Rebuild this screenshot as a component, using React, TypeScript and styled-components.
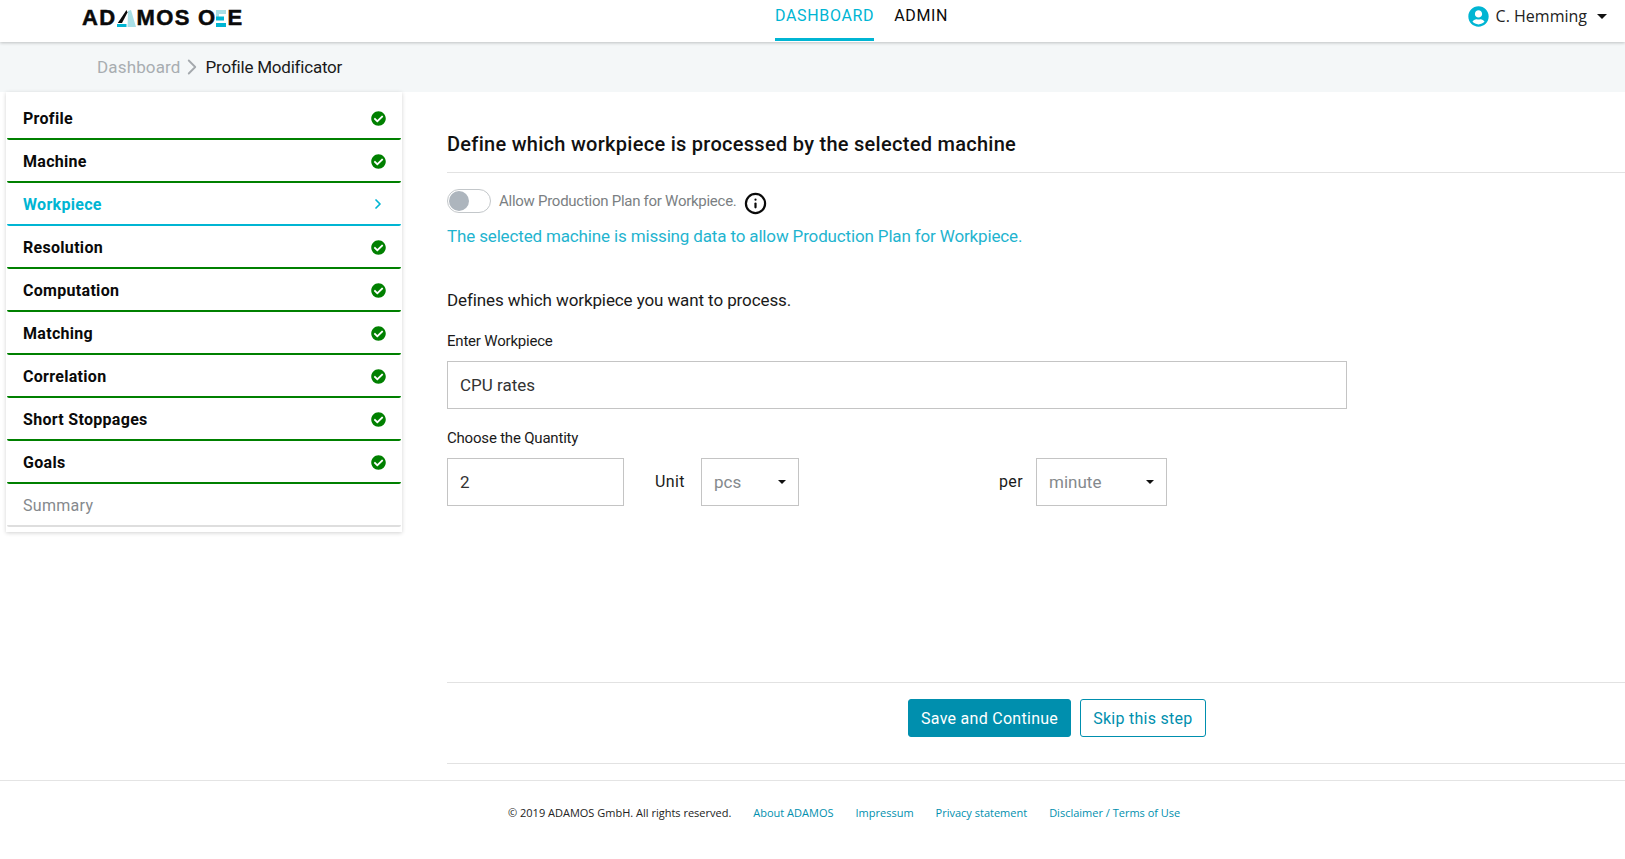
import React from "react";
import styled, { createGlobalStyle } from "styled-components";
import { FaCheckCircle, FaUserCircle } from "react-icons/fa";
import { ChevronRight, Info } from "lucide-react";

const TEAL = "#00b5d3";
const DEEP = "#008fae";
const GREEN = "#008000";
const FONT = `"Roboto", "Liberation Sans", sans-serif`;

const Global = createGlobalStyle`
  html, body { margin: 0; padding: 0; background: #fff; }
  body { font-family: ${FONT}; color: #111; overflow: hidden; }
  * { box-sizing: border-box; }
`;

const Page = styled.div`
  width: 1625px;
  height: 859px;
  display: flex;
  flex-direction: column;
  overflow: hidden;
`;

const Header = styled.header`
  height: 42px;
  flex: none;
  display: grid;
  grid-template-columns: 775px auto 1fr;
  position: relative;
  z-index: 2;
  background: #fff;
  box-shadow: 0 1px 3px rgba(0, 0, 0, 0.22);
`;

const LogoWrap = styled.div`
  padding: 4px 0 0 82px;
  height: 32px;
  display: flex;
  align-items: center;
  font-family: "Liberation Sans", sans-serif;
  font-weight: 700;
  font-size: 22px;
  letter-spacing: 1.4px;
  -webkit-text-stroke: 0.5px #0a0a0a;
  color: #0a0a0a;
  white-space: nowrap;
`;

const LogoGap = styled.span`
  width: 7px;
`;

const LogoMarkA = styled.svg`
  margin: 0 1px 0 0;
`;

const LogoMarkE = styled.svg`
  margin: 0 1px 0 0;
`;

const Nav = styled.nav`
  display: flex;
  gap: 20px;
`;

const NavLink = styled.a<{ $active?: boolean }>`
  height: 41px;
  padding-top: 5px;
  font-size: 16px;
  line-height: 21px;
  letter-spacing: 0.65px;
  color: ${(p) => (p.$active ? TEAL : "#0a0a0a")};
  border-bottom: 3px solid ${(p) => (p.$active ? TEAL : "transparent")};
`;

const UserMenu = styled.div`
  justify-self: end;
  display: flex;
  align-items: center;
  height: 32px;
  padding-right: 18px;
  font-family: "Open Sans", sans-serif;
  font-size: 16px;
  color: #222;
`;

const UserIcon = styled(FaUserCircle)`
  color: ${TEAL};
  font-size: 21px;
  margin-right: 7px;
`;

const Caret = styled.span<{ $w?: number }>`
  display: inline-block;
  width: 0;
  height: 0;
  border-left: ${(p) => p.$w ?? 4}px solid transparent;
  border-right: ${(p) => p.$w ?? 4}px solid transparent;
  border-top: ${(p) => p.$w ?? 4}px solid #111;
`;

const UserCaret = styled(Caret)`
  margin-left: 10px;
`;

const Crumbs = styled.div`
  height: 50px;
  flex: none;
  background: #f4f7f8;
  display: flex;
  align-items: center;
  padding: 0 0 0 97px;
  font-size: 17px;
`;

const CrumbLink = styled.span`
  color: #a8adb1;
  letter-spacing: 0.15px;
`;

const CrumbSep = styled(ChevronRight)`
  color: #a4a9ad;
  margin: 0 1px 0 -2px;
`;

const CrumbNow = styled.span`
  color: #1a1a1a;
  letter-spacing: -0.22px;
`;

const Body = styled.div`
  flex: 1;
  min-height: 0;
  display: flex;
  align-items: flex-start;
`;

const Steps = styled.aside`
  width: 396px;
  flex: none;
  margin-left: 6px;
  padding: 5px 0 5px;
  background: #fff;
  box-shadow: 0 1px 4px rgba(0, 0, 0, 0.18);
`;

const Step = styled.div<{ $state: "done" | "active" | "todo" }>`
  height: 43px;
  margin: 0 1px;
  padding: 1px 15px 0 16px;
  display: flex;
  align-items: center;
  justify-content: space-between;
  font-size: 16px;
  font-weight: ${(p) => (p.$state === "todo" ? 400 : 700)};
  letter-spacing: 0.3px;
  color: ${(p) => (p.$state === "active" ? TEAL : p.$state === "todo" ? "#85898d" : "#0a0a0a")};
  border-bottom: 2px solid
    ${(p) => (p.$state === "active" ? TEAL : p.$state === "todo" ? "#dedede" : GREEN)};
  border-radius: 0 0 2px 2px;
`;

const Done = styled(FaCheckCircle)`
  color: ${GREEN};
  font-size: 15px;
`;

const ActiveChevron = styled(ChevronRight)`
  color: ${TEAL};
`;

const Main = styled.main`
  flex: 1;
  min-width: 0;
  margin-left: 45px;
  display: flex;
  flex-direction: column;
`;

const Title = styled.h1`
  margin: 0;
  height: 81px;
  padding-top: 39px;
  font-size: 20px;
  line-height: 26px;
  font-weight: 500;
  letter-spacing: 0.28px;
  color: #111;
  border-bottom: 1px solid #e2e2e2;
`;

const ToggleRow = styled.div`
  margin-top: 16px;
  height: 24px;
  display: flex;
  align-items: center;
`;

const Toggle = styled.span`
  width: 44px;
  height: 24px;
  border: 1px solid #c3c7ca;
  border-radius: 12px;
  background: #fff;
  display: flex;
  align-items: center;
  padding-left: 1px;
`;

const Knob = styled.span`
  width: 20px;
  height: 20px;
  border-radius: 50%;
  background: #adb5bd;
`;

const ToggleLabel = styled.span`
  margin-left: 8px;
  font-size: 15px;
  color: #7b7f83;
  letter-spacing: -0.27px;
`;

const InfoIcon = styled(Info)`
  margin: 4px 0 0 7px;
  color: #0a0a0a;
`;

const Notice = styled.p`
  margin: 11px 0 0;
  font-size: 17px;
  line-height: 24px;
  color: #1fb4cf;
  letter-spacing: -0.15px;
`;

const Intro = styled.p`
  margin: 40px 0 0;
  font-size: 17px;
  line-height: 24px;
  color: #1a1a1a;
  letter-spacing: -0.1px;
`;

const FieldLabel = styled.label`
  display: block;
  font-size: 15px;
  line-height: 20px;
  color: #1a1a1a;
  letter-spacing: -0.2px;
`;

const WorkpieceLabel = styled(FieldLabel)`
  margin-top: 19px;
`;

const QuantityLabel = styled(FieldLabel)`
  margin-top: 19px;
`;

const TextInput = styled.input<{ $w: number }>`
  width: ${(p) => p.$w}px;
  height: 48px;
  padding: 0 12px;
  border: 1px solid #c4c4c4;
  border-radius: 0;
  outline: none;
  background: #fff;
  font-family: ${FONT};
  font-size: 17px;
  color: #333;
`;

const WorkpieceInput = styled(TextInput)`
  display: block;
  margin-top: 10px;
`;

const QuantityRow = styled.div`
  margin-top: 10px;
  display: flex;
  align-items: center;
`;

const RowText = styled.span<{ $left: number; $right: number }>`
  margin: -2px ${(p) => p.$right}px 0 ${(p) => p.$left}px;
  font-size: 16px;
  letter-spacing: 0.4px;
  color: #1a1a1a;
`;

const Select = styled.div<{ $w: number }>`
  width: ${(p) => p.$w}px;
  height: 48px;
  padding: 0 12px;
  border: 1px solid #c4c4c4;
  display: flex;
  align-items: center;
  justify-content: space-between;
  font-size: 17px;
  color: #85898d;
`;

const Actions = styled.div`
  margin-top: 176px;
  height: 82px;
  border-top: 1px solid #e2e2e2;
  border-bottom: 1px solid #e2e2e2;
  display: flex;
  align-items: flex-start;
  gap: 9px;
  padding-left: 461px;
  padding-top: 16px;
`;

const Button = styled.button<{ $primary?: boolean }>`
  height: 38px;
  padding: 0 12px;
  border: 1px solid ${DEEP};
  border-radius: 3px;
  background: ${(p) => (p.$primary ? DEEP : "#fff")};
  color: ${(p) => (p.$primary ? "#fff" : DEEP)};
  font-family: ${FONT};
  font-size: 16px;
  letter-spacing: 0.28px;
`;

const Footer = styled.footer`
  height: 79px;
  flex: none;
  border-top: 1px solid #e4e4e4;
  display: flex;
  gap: 22px;
  padding: 23px 0 0 508px;
  font-family: "Open Sans", sans-serif;
  font-size: 11px;
  line-height: 18px;
  color: #222;
`;

const FooterLink = styled.a`
  color: ${DEEP};
`;

const steps: { label: string; state: "done" | "active" | "todo" }[] = [
  { label: "Profile", state: "done" },
  { label: "Machine", state: "done" },
  { label: "Workpiece", state: "active" },
  { label: "Resolution", state: "done" },
  { label: "Computation", state: "done" },
  { label: "Matching", state: "done" },
  { label: "Correlation", state: "done" },
  { label: "Short Stoppages", state: "done" },
  { label: "Goals", state: "done" },
  { label: "Summary", state: "todo" },
];

const LogoA = () => (
  <LogoMarkA width="19" height="17" viewBox="0 0 19 17" aria-label="A">
    <polygon points="9.5,0 10.5,2.5 5,13 0.8,13" fill="#0a0a0a" />
    <polygon points="0,14 9.5,14 9.5,17 0,17" fill={TEAL} />
    <polygon points="11,1 14,0 19,17 10.5,17" fill="#a9dfe6" />
  </LogoMarkA>
);

const LogoE = () => (
  <LogoMarkE width="10" height="17" viewBox="0 0 10 17" aria-label="E">
    <rect x="0" y="0" width="10" height="4" fill="#a9dfe6" />
    <rect x="0" y="0" width="3" height="9" fill="#a9dfe6" />
    <rect x="0" y="6.5" width="8" height="4" fill={TEAL} />
    <rect x="0" y="13" width="10" height="4" fill={TEAL} />
  </LogoMarkE>
);

export default function App() {
  return (
    <Page>
      <Global />
      <Header>
        <LogoWrap>
          AD
          <LogoA />
          MOS
          <LogoGap />
          O
          <LogoE />
          E
        </LogoWrap>
        <Nav>
          <NavLink $active>DASHBOARD</NavLink>
          <NavLink>ADMIN</NavLink>
        </Nav>
        <UserMenu>
          <UserIcon />
          C. Hemming
          <UserCaret $w={5} />
        </UserMenu>
      </Header>
      <Crumbs>
        <CrumbLink>Dashboard</CrumbLink>
        <CrumbSep size={26} strokeWidth={1.7} />
        <CrumbNow>Profile Modificator</CrumbNow>
      </Crumbs>
      <Body>
        <Steps>
          {steps.map((s) => (
            <Step key={s.label} $state={s.state}>
              {s.label}
              {s.state === "done" && <Done />}
              {s.state === "active" && <ActiveChevron size={16} strokeWidth={2.6} />}
            </Step>
          ))}
        </Steps>
        <Main>
          <Title>Define which workpiece is processed by the selected machine</Title>
          <ToggleRow>
            <Toggle>
              <Knob />
            </Toggle>
            <ToggleLabel>Allow Production Plan for Workpiece.</ToggleLabel>
            <InfoIcon size={23} strokeWidth={2.3} />
          </ToggleRow>
          <Notice>The selected machine is missing data to allow Production Plan for Workpiece.</Notice>
          <Intro>Defines which workpiece you want to process.</Intro>
          <WorkpieceLabel>Enter Workpiece</WorkpieceLabel>
          <WorkpieceInput $w={900} readOnly value="CPU rates" />
          <QuantityLabel>Choose the Quantity</QuantityLabel>
          <QuantityRow>
            <TextInput $w={177} readOnly value="2" />
            <RowText $left={31} $right={16}>Unit</RowText>
            <Select $w={98}>
              pcs
              <Caret />
            </Select>
            <RowText $left={200} $right={13}>per</RowText>
            <Select $w={131}>
              minute
              <Caret />
            </Select>
          </QuantityRow>
          <Actions>
            <Button $primary>Save and Continue</Button>
            <Button>Skip this step</Button>
          </Actions>
        </Main>
      </Body>
      <Footer>
        <span>© 2019 ADAMOS GmbH. All rights reserved.</span>
        <FooterLink>About ADAMOS</FooterLink>
        <FooterLink>Impressum</FooterLink>
        <FooterLink>Privacy statement</FooterLink>
        <FooterLink>Disclaimer / Terms of Use</FooterLink>
      </Footer>
    </Page>
  );
}
